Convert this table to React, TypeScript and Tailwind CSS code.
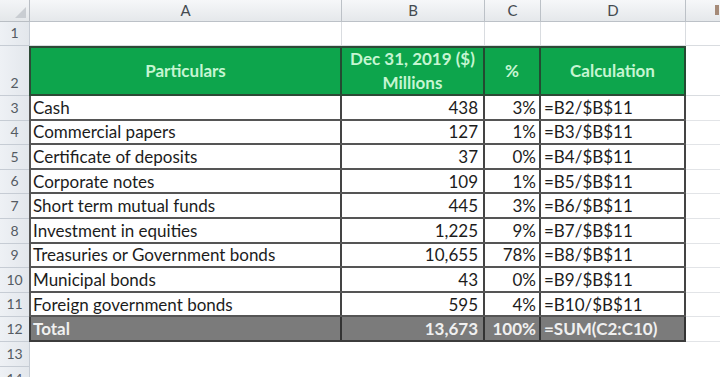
import React from 'react'

const FONT = "font-['Lato','Open_Sans','Liberation_Sans',sans-serif]"

const COLS = [
  { key: 'A', w: 'w-[312px]' },
  { key: 'B', w: 'w-[143px]' },
  { key: 'C', w: 'w-[56px]' },
  { key: 'D', w: 'w-[145px]' },
]

const ROWS = [
  ['Cash', '438', '3%', '=B2/$B$11'],
  ['Commercial papers', '127', '1%', '=B3/$B$11'],
  ['Certificate of deposits', '37', '0%', '=B4/$B$11'],
  ['Corporate notes', '109', '1%', '=B5/$B$11'],
  ['Short term mutual funds', '445', '3%', '=B6/$B$11'],
  ['Investment in equities', '1,225', '9%', '=B7/$B$11'],
  ['Treasuries or Government bonds', '10,655', '78%', '=B8/$B$11'],
  ['Municipal bonds', '43', '0%', '=B9/$B$11'],
  ['Foreign government bonds', '595', '4%', '=B10/$B$11'],
]

function RowHead({ n, h }: { n?: number; h: string }) {
  return (
    <div className={`${h} w-[30px] shrink-0 flex items-end justify-center pb-[2px] bg-gradient-to-r from-[#eef1f5] to-[#e3e7ec] border-b border-r border-[#c6ccd4] text-[14px] text-[#555b63]`}>
      {n}
    </div>
  )
}

function Blank({ h, w }: { h: string; w: string }) {
  return <div className={`${h} ${w} shrink-0 border-r border-b border-[#d9dce0] bg-white`} />
}

export default function App() {
  return (
    <div className={`w-[720px] h-[377px] overflow-hidden bg-white ${FONT}`}>
      {/* column headers */}
      <div className="flex h-[22px]">
        <div className="w-[30px] shrink-0 relative bg-gradient-to-b from-[#f3f5f7] to-[#e4e7ea] border-r border-b border-[#b9bec4]">
          <svg className="absolute right-[3px] bottom-[3px]" width="11" height="11" viewBox="0 0 11 11">
            <polygon points="11,0 11,11 0,11" fill="#c9cdd2" />
          </svg>
        </div>
        {COLS.map(c => (
          <div key={c.key} className={`${c.w} shrink-0 flex items-center justify-center bg-gradient-to-b from-[#f6f7f9] to-[#e5e8eb] border-r border-b border-[#bcc1c7] text-[15px] text-[#444a50]`}>
            {c.key}
          </div>
        ))}
        <div className="flex-1 relative bg-gradient-to-b from-[#f6f7f9] to-[#e5e8eb] border-b border-[#bcc1c7]">
          <span className="absolute left-[29px] top-[5px] w-[4px] h-[10px] bg-[#a58a78]" />
        </div>
      </div>

      {/* row 1 */}
      <div className="flex">
        <RowHead n={1} h="h-[24px]" />
        {COLS.map(c => <Blank key={c.key} h="h-[24px]" w={c.w} />)}
        <div className="flex-1 h-[24px] border-b border-[#d9dce0]" />
      </div>

      {/* row 2 - header */}
      <div className="flex">
        <RowHead n={2} h="h-[50px]" />
        <div className="flex h-[50px] bg-[#0da54c] border-t-2 border-l-2 border-b-2 border-[#2c4a36] text-[#c6f5d2] font-bold text-[17px] -ml-[1px]">
          <div className="w-[311px] flex items-center justify-center border-r-2 border-[#234a31]">Particulars</div>
          <div className="w-[143px] flex flex-col items-center justify-center leading-[24px] border-r-2 border-[#234a31]">
            <span>Dec 31, 2019 ($)</span>
            <span>Millions</span>
          </div>
          <div className="w-[56px] flex items-center justify-center border-r-2 border-[#234a31]">%</div>
          <div className="w-[145px] flex items-center justify-center border-r-2 border-[#234a31]">Calculation</div>
        </div>
        <div className="flex-1 h-[50px] border-b border-[#d9dce0]" />
      </div>

      {/* data rows */}
      {ROWS.map((r, i) => (
        <div key={i} className="flex">
          <RowHead n={i + 3} h="h-[24.6px]" />
          <div className="flex h-[24.6px] -ml-[1px] border-l-2 border-b-2 border-[#555] text-[17px] text-[#1c1c1c] leading-none">
            <div className="w-[311px] flex items-center pl-[2px] border-r-2 border-[#444]">{r[0]}</div>
            <div className="w-[143px] flex items-center justify-end pr-[5px] border-r-2 border-[#444]">{r[1]}</div>
            <div className="w-[56px] flex items-center justify-end pr-[3px] border-r-2 border-[#444]">{r[2]}</div>
            <div className="w-[145px] flex items-center pl-[3px] border-r-2 border-[#444]">{r[3]}</div>
          </div>
          <div className="flex-1 h-[24.6px] border-b border-[#e2e4e7]" />
        </div>
      ))}

      {/* total row */}
      <div className="flex">
        <RowHead n={12} h="h-[24.6px]" />
        <div className="flex h-[24.6px] -ml-[1px] bg-[#7b7b7b] border-l-2 border-b-2 border-[#3c3c3c] text-[17px] font-bold text-[#f0f0f0] leading-none">
          <div className="w-[311px] flex items-center pl-[2px] border-r-2 border-[#333]">Total</div>
          <div className="w-[143px] flex items-center justify-end pr-[5px] border-r-2 border-[#333]">13,673</div>
          <div className="w-[56px] flex items-center justify-end pr-[3px] border-r-2 border-[#333]">100%</div>
          <div className="w-[145px] flex items-center pl-[3px] border-r-2 border-[#333]">=SUM(C2:C10)</div>
        </div>
        <div className="flex-1 h-[24.6px] border-b border-[#e2e4e7]" />
      </div>

      {/* rows 13-14 */}
      <div className="flex">
        <RowHead n={13} h="h-[25px]" />
        <div className="flex-1 h-[25px]" />
      </div>
      <div className="flex">
        <RowHead n={14} h="h-[25px]" />
        <div className="flex-1 h-[25px]" />
      </div>
    </div>
  )
}
